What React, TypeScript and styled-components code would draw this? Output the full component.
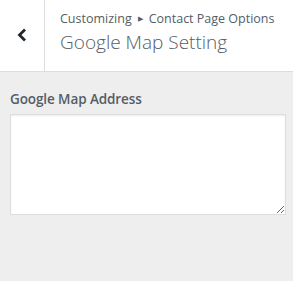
import React from "react";
import styled, { createGlobalStyle } from "styled-components";

const Global = createGlobalStyle`
  html, body {
    margin: 0;
    padding: 0;
    background: #eeeeee;
    font-family: "Open Sans", "Noto Sans", sans-serif;
  }
`;

const Panel = styled.div`
  width: 293px;
  height: 281px;
  background: #eeeeee;
  display: flex;
  flex-direction: column;
  overflow: hidden;
`;

const Header = styled.div`
  display: flex;
  height: 71px;
  background: #fff;
  border-bottom: 1px solid #ddd;
`;

const BackButton = styled.button`
  width: 45px;
  flex: none;
  border: none;
  border-right: 1px solid #ddd;
  background: #fff;
  padding: 0 0 2px 0;
  display: flex;
  align-items: center;
  justify-content: center;
  cursor: pointer;
`;

const HeaderText = styled.div`
  display: flex;
  flex-direction: column;
  padding: 9px 0 0 15px;
  color: #555d66;
`;

const Crumb = styled.span`
  font-size: 12.5px;
  line-height: 20px;
`;

const Arrow = styled.span`
  font-size: 7px;
  margin: 0 6px;
  vertical-align: 2px;
`;

const Title = styled.h3`
  margin: 0;
  font-size: 19px;
  font-weight: 300;
  line-height: 27px;
`;

const Body = styled.div`
  padding: 17px 8px 0 10px;
  display: flex;
  flex-direction: column;
`;

const Label = styled.label`
  font-size: 13.5px;
  font-weight: 600;
  color: #555d66;
  line-height: 20px;
  margin-bottom: 5px;
  letter-spacing: -0.1px;
`;

const TextArea = styled.textarea`
  box-sizing: border-box;
  width: 276px;
  height: 101px;
  border: 1px solid #ddd;
  background: #fff;
  box-shadow: inset 0 1px 2px rgba(0, 0, 0, 0.07);
  border-radius: 0;
  outline: none;
  font-family: inherit;
  resize: vertical;
`;

export default function App() {
  return (
    <>
      <Global />
      <Panel>
        <Header>
          <BackButton aria-label="Back">
            <svg width="12" height="16" viewBox="0 0 12 16">
              <path d="M9 2.5 L3.5 8 L9 13.5" fill="none" stroke="#23282d" strokeWidth="2.8" />
            </svg>
          </BackButton>
          <HeaderText>
            <Crumb>
              Customizing<Arrow>▶</Arrow>Contact Page Options
            </Crumb>
            <Title>Google Map Setting</Title>
          </HeaderText>
        </Header>
        <Body>
          <Label>Google Map Address</Label>
          <TextArea />
        </Body>
      </Panel>
    </>
  );
}
